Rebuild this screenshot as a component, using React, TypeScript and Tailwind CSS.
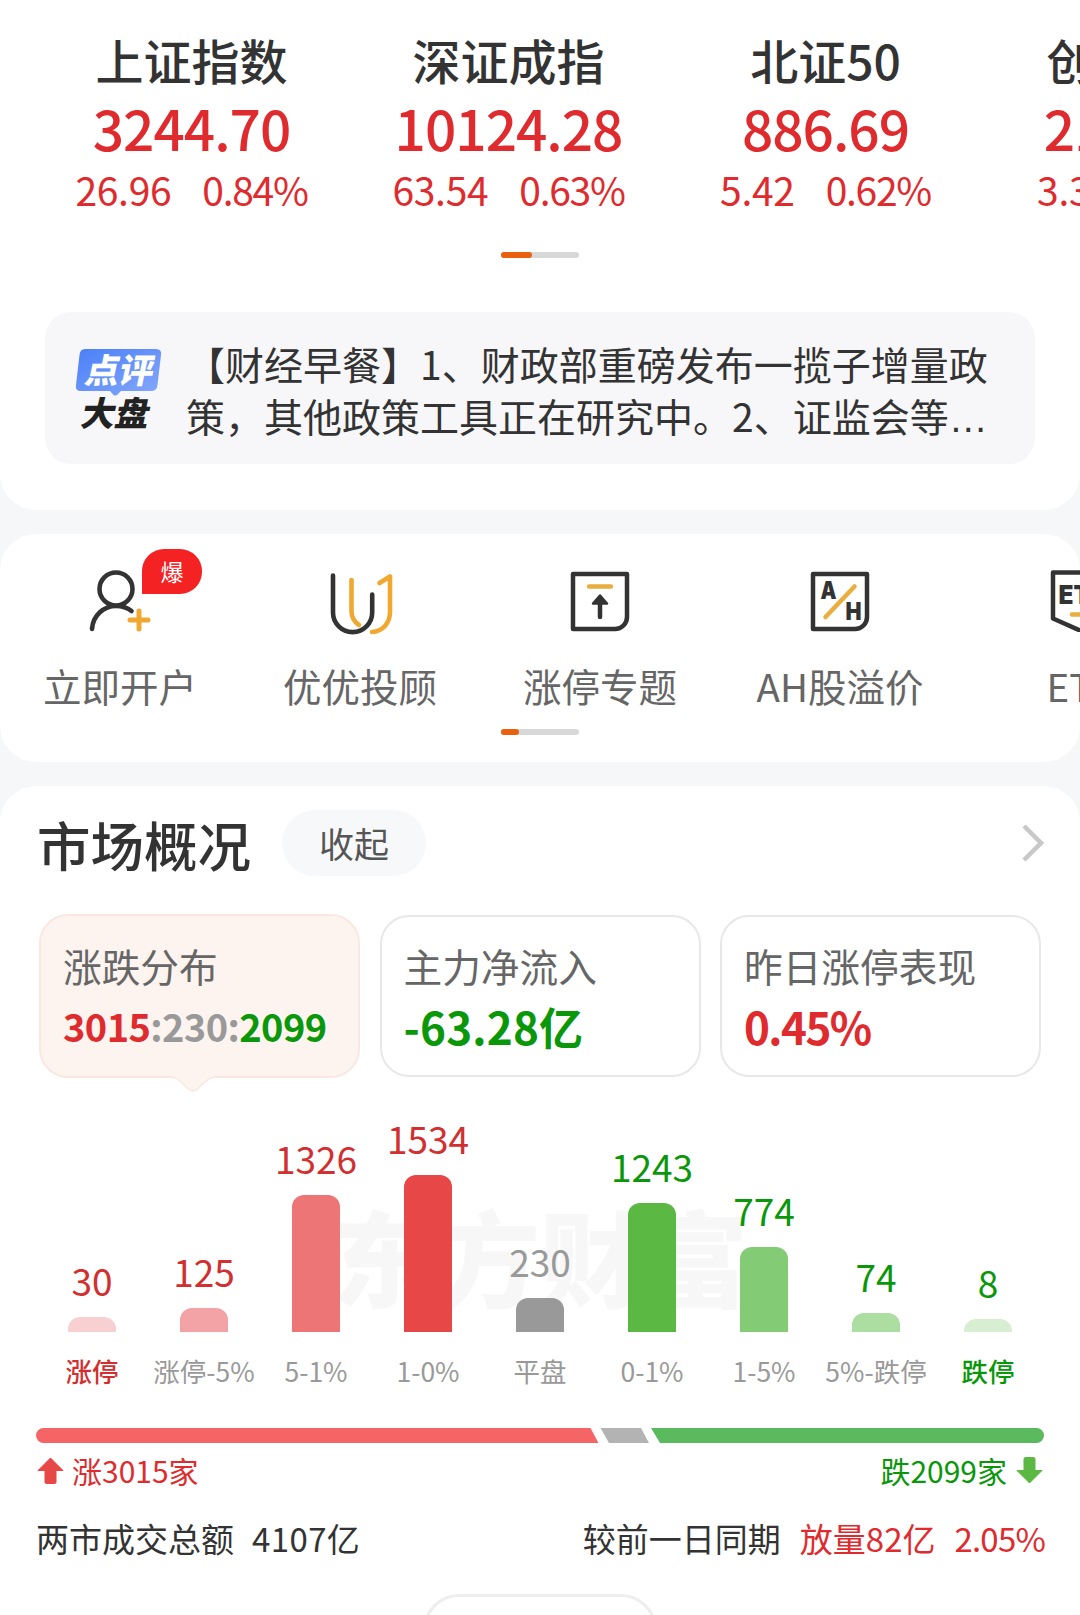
import React from 'react';
import clsx from 'clsx';

const RED = 'text-[#e02b2e]';
const GREEN = 'text-[#0a970a]';

const indices = [
  { name: '上证指数', value: '3244.70', change: '26.96', percent: '0.84%' },
  { name: '深证成指', value: '10124.28', change: '63.54', percent: '0.63%' },
  { name: '北证50', value: '886.69', change: '5.42', percent: '0.62%' },
  { name: '创业板指', value: '2104.09', change: '3.33', percent: '0.16%' },
];

const bars = [
  { label: '涨停', count: 30, height: 15, bar: 'bg-[#f9d0d1]', text: 'text-[#d22f30]', edge: 'text-[#d22f30] font-medium' },
  { label: '涨停-5%', count: 125, height: 24, bar: 'bg-[#f3a3a5]', text: 'text-[#d22f30]' },
  { label: '5-1%', count: 1326, height: 137, bar: 'bg-[#ed7576]', text: 'text-[#d22f30]' },
  { label: '1-0%', count: 1534, height: 157, bar: 'bg-[#e84747]', text: 'text-[#d22f30]' },
  { label: '平盘', count: 230, height: 34, bar: 'bg-[#999999]', text: 'text-[#999999]' },
  { label: '0-1%', count: 1243, height: 129, bar: 'bg-[#5bb943]', text: 'text-[#0a970a]' },
  { label: '1-5%', count: 774, height: 85, bar: 'bg-[#84cb75]', text: 'text-[#0a970a]' },
  { label: '5%-跌停', count: 74, height: 19, bar: 'bg-[#acdda1]', text: 'text-[#0a970a]' },
  { label: '跌停', count: 8, height: 13, bar: 'bg-[#d7eed2]', text: 'text-[#0a970a]', edge: 'text-[#0a970a] font-medium' },
];

const OpenAccountIcon = () => (
  <svg className="w-[64px] h-[64px]" viewBox="0 0 64 64" fill="none" strokeLinecap="round">
    <circle cx="28" cy="21" r="16.5" stroke="#333" strokeWidth="4.6" />
    <path d="M4 61C5 47 16 38 28 38C34 38 39 39.500 43.500 43" stroke="#333" strokeWidth="4.6" />
    <path d="M51 43V61M42 52H60" stroke="#f0a830" strokeWidth="5" />
  </svg>
);

const AdvisorIcon = () => (
  <svg className="w-[64px] h-[64px] overflow-visible" viewBox="0 0 64 64" fill="none" strokeLinecap="round" strokeLinejoin="round">
    <path d="M23.500 12V43C23.500 49 26.500 54 31 57" stroke="#f0a830" strokeWidth="4.6" />
    <path d="M51.500 15L62 8.500V44C62 55 54.500 63.500 44 64" stroke="#f0a830" strokeWidth="4.6" />
    <path d="M5 7.500V44.500A19.600 19.600 0 0 0 44.200 44.500V26.500" stroke="#333" strokeWidth="4.6" />
  </svg>
);

const LimitUpIcon = () => (
  <svg className="w-[64px] h-[64px]" viewBox="0 0 64 64" fill="none" strokeLinecap="round" strokeLinejoin="round">
    <path d="M5 6H59V49A12 12 0 0 1 47 61H5Z" stroke="#333" strokeWidth="4.500" />
    <path d="M21 18.500H43" stroke="#e8ae40" strokeWidth="4.500" />
    <path d="M32 49V32" stroke="#333" strokeWidth="4.500" />
    <path d="M32 27.500L39 35.500H25Z" fill="#333" stroke="#333" strokeWidth="2.500" />
  </svg>
);

const PremiumIcon = () => (
  <svg className="w-[64px] h-[64px]" viewBox="0 0 64 64" fill="none" strokeLinecap="round" strokeLinejoin="round">
    <path d="M5 6H59V49A12 12 0 0 1 47 61H5Z" stroke="#333" strokeWidth="4.500" />
    <path d="M17.500 49L46.500 18.500" stroke="#e8ae40" strokeWidth="4.500" />
    <text x="20.500" y="30.500" textAnchor="middle" fontSize="24" fontWeight="900" fontFamily="Inter" fill="#333" textLength="16" lengthAdjust="spacingAndGlyphs">A</text>
    <text x="45.500" y="51.500" textAnchor="middle" fontSize="25" fontWeight="900" fontFamily="Inter" fill="#333" textLength="16" lengthAdjust="spacingAndGlyphs">H</text>
  </svg>
);

const EtfIcon = () => (
  <svg className="w-[64px] h-[64px]" viewBox="0 0 64 64" fill="none" strokeLinecap="round" strokeLinejoin="round">
    <path d="M5 4.500H59V50.500L32 62.500L5 50.500Z" stroke="#333" strokeWidth="4.500" />
    <text x="33.500" y="36" textAnchor="middle" fontSize="26" fontWeight="900" fontFamily="Inter" fill="#333" textLength="46" lengthAdjust="spacingAndGlyphs">ETF</text>
    <path d="M24 46.500H41" stroke="#e8ae40" strokeWidth="4.500" />
  </svg>
);

const shortcuts = [
  { label: '立即开户', icon: OpenAccountIcon, badge: '爆' },
  { label: '优优投顾', icon: AdvisorIcon },
  { label: '涨停专题', icon: LimitUpIcon },
  { label: 'AH股溢价', icon: PremiumIcon },
  { label: 'ETF', icon: EtfIcon },
];

const Pager = ({ active }: { active: string }) => (
  <div className="w-[78px] h-[6px] mx-auto rounded-full bg-[#d8d8d8]">
    <div className={clsx('h-full rounded-full bg-[#e9600f]', active)} />
  </div>
);

const IndexStrip = () => (
  <div className="flex pl-[33px] pt-[27px]">
    {indices.map((item) => (
      <div key={item.name} className="w-[317px] shrink-0 flex flex-col items-center whitespace-nowrap">
        <div className="text-[48px] leading-[64px] font-medium text-[#333]">{item.name}</div>
        <div className={clsx('text-[55px] leading-[73px] font-medium tracking-[-1px]', RED)}>{item.value}</div>
        <div className={clsx('flex gap-[31px] pb-px text-[39px] leading-[51px]', RED)}>
          <span className="tracking-[-0.3px]">{item.change}</span>
          <span className="tracking-[-1.3px]">{item.percent}</span>
        </div>
      </div>
    ))}
  </div>
);

const NewsLogo = () => (
  <svg className="w-[88px] h-[84px] shrink-0" viewBox="0 0 88 84">
    <defs>
      <linearGradient id="bubble" x1="0" y1="0" x2="1" y2="1">
        <stop offset="0" stopColor="#4a80f8" />
        <stop offset="1" stopColor="#86a8fb" />
      </linearGradient>
    </defs>
    <path
      d="M10 3H81Q87 3 86 9L82.500 39Q82 45 76 45H46L42 49Q40 50 38.500 49L35 45H6Q0 45 1 39L4.500 9Q5 3 10 3Z"
      fill="url(#bubble)"
    />
    <g fontWeight="900" fontSize="34" transform="skewX(-12)">
      <text x="16.500" y="37" fill="#fff">点评</text>
      <text x="21.500" y="80.500" fill="#222">大盘</text>
    </g>
  </svg>
);

const Shortcuts = () => (
  <div className="flex">
    {shortcuts.map(({ label, icon: Icon, badge }) => (
      <div key={label} className="relative w-[240px] shrink-0 flex flex-col items-center pt-[34px] whitespace-nowrap">
        <Icon />
        {badge && (
          <span className="absolute left-[142px] top-[15px] w-[60px] h-[45px] rounded-[22px] rounded-bl-none bg-[#f42222] flex items-center justify-center text-[23px] text-white">
            {badge}
          </span>
        )}
        <span className="mt-[28px] text-[38.500px] leading-[50px] text-[#666]">{label}</span>
      </div>
    ))}
  </div>
);

const StatCard = ({ title, children }: { title: string; children: React.ReactNode }) => (
  <div className="w-[321px] h-[162px] rounded-[29px] border-2 border-[#e8e8e8] pl-[22px] pt-[22px] whitespace-nowrap">
    <div className="text-[38.700px] leading-[52px] text-[#666]">{title}</div>
    {children}
  </div>
);

const Distribution = () => (
  <div className="relative h-[290px] mt-[23px]">
    <div className="absolute inset-x-0 top-[84px] text-center text-[104px] leading-[140px] font-black text-[#f7f7f7]">东方财富</div>
    <div className="relative flex h-full pl-[36px]">
      {bars.map((item) => (
        <div key={item.label} className="w-[112px] shrink-0 flex flex-col items-center justify-end whitespace-nowrap">
          <span className={clsx('text-[37px] leading-[44px] mb-[15px]', item.text)}>{item.count}</span>
          <div className={clsx('w-[48px] rounded-t-[12px]', item.bar)} style={{ height: item.height }} />
          <span className={clsx('mt-[19px] text-[26.500px] leading-[40px]', item.edge ?? 'text-[#999]')}>{item.label}</span>
        </div>
      ))}
    </div>
  </div>
);

export default function App() {
  return (
    <div
      lang="zh-CN"
      className="w-[1080px] h-[1615px] overflow-hidden bg-[#f6f7f9] flex flex-col gap-6 font-['Noto_Sans_CJK_SC',sans-serif]"
    >
      <section className="h-[510px] shrink-0 overflow-hidden rounded-b-[36px] bg-white">
        <IndexStrip />
        <div className="mt-[36px]">
          <Pager active="w-[31px]" />
        </div>
        <div className="mt-[54px] mx-[45px] h-[152px] rounded-[26px] bg-[#f7f7f9] flex items-center pl-[30px]">
          <NewsLogo />
          <div className="ml-[23px] pt-[6px] text-[39px] leading-[51.500px] text-[#333] whitespace-nowrap">
            <div>【财经早餐】1、财政部重磅发布一揽子增量政</div>
            <div>
              策，其他政策工具正在研究中。2、证监会等<span className="font-['Liberation_Sans']">…</span>
            </div>
          </div>
        </div>
      </section>

      <section className="h-[228px] shrink-0 overflow-hidden rounded-[36px] bg-white">
        <Shortcuts />
        <div className="mt-[19px]">
          <Pager active="w-[18px]" />
        </div>
      </section>

      <section className="flex-1 overflow-hidden rounded-t-[36px] bg-white">
        <div className="flex items-center h-[66px] mt-[24px] pl-[37px] pr-[36px]">
          <h2 className="pt-[2px] text-[53.500px] leading-[66px] font-medium text-[#333]">市场概况</h2>
          <button className="ml-[31px] w-[144px] h-[66px] rounded-full bg-[#f7f8fa] text-[35px] text-[#555]">收起</button>
          <svg className="ml-auto w-[22px] h-[38px]" viewBox="0 0 22 38" fill="none">
            <path d="M2 2L19 19L2 36" stroke="#c8c8c8" strokeWidth="4.500" />
          </svg>
        </div>

        <div className="flex items-center justify-between mt-[38px] pl-[39px] pr-[39px]">
          <div className="relative w-[321px] h-[164px] rounded-[29px] border-2 border-[#f9e8e2] bg-[#fdf4f0] pl-[22px] pt-[23px] whitespace-nowrap">
            <div className="text-[38.700px] leading-[52px] text-[#666]">涨跌分布</div>
            <div className="text-[38px] leading-[69px] font-bold text-[#999] tracking-[-0.6px]">
              <span className={RED}>3015</span>:230:<span className={GREEN}>2099</span>
            </div>
            <svg className="absolute left-[131px] top-[159px] w-[42px] h-[18px]" viewBox="0 0 42 18">
              <path d="M0 0H42V2.500C38 2.500 36 4 34 6L25 14.500Q21 17.500 17 14.500L8 6C6 4 4 2.500 0 2.500Z" fill="#fdf4f0" />
              <path d="M0 2.500C4 2.500 6 4 8 6L17 14.500Q21 17.500 25 14.500L34 6C36 4 38 2.500 42 2.500" fill="none" stroke="#f9e8e2" strokeWidth="1.500" />
            </svg>
          </div>
          <StatCard title="主力净流入">
            <div className={clsx('text-[44px] leading-[70px] font-bold tracking-[0.2px]', GREEN)}>-63.28亿</div>
          </StatCard>
          <StatCard title="昨日涨停表现">
            <div className={clsx('text-[44px] leading-[70px] font-bold tracking-[-1.6px]', RED)}>0.45%</div>
          </StatCard>
        </div>

        <Distribution />

        <svg className="block mt-[37px] ml-[36px] w-[1008px] h-[15px]" viewBox="0 0 1008 15">
          <path d="M7.500 0H554.500L562.500 15H7.500A7.500 7.500 0 0 1 7.500 0Z" fill="#f56565" />
          <path d="M564.500 0H605L613 15H573Z" fill="#b3b3b3" />
          <path d="M615 0H1000.500A7.500 7.500 0 0 1 1000.500 15H624Z" fill="#5cba5e" />
        </svg>

        <div className="flex justify-between mt-[9px] pl-[37px] pr-[37px] text-[30px] leading-[36px]">
          <div className={clsx('flex items-center gap-[8px]', RED)}>
            <svg className="w-[27px] h-[27px]" viewBox="0 0 27 27">
              <path d="M13.500 1L26 13.500H19V25Q19 26.500 17.500 26.500H9.500Q8 26.500 8 25V13.500H1Z" fill="#e84747" stroke="#e84747" strokeLinejoin="round" />
            </svg>
            涨3015家
          </div>
          <div className={clsx('flex items-center gap-[9px]', GREEN)}>
            跌2099家
            <svg className="w-[27px] h-[27px]" viewBox="0 0 27 27">
              <path d="M13.500 26L26 13.500H19V2Q19 0.500 17.500 0.500H9.500Q8 0.500 8 2V13.500H1Z" fill="#5bb943" stroke="#5bb943" strokeLinejoin="round" />
            </svg>
          </div>
        </div>

        <div className="flex justify-between mt-[28px] pl-[36px] pr-[35px] text-[33px] leading-[44px] text-[#333] whitespace-nowrap">
          <div className="flex gap-[18px]">
            <span>两市成交总额</span>
            <span className="tracking-[0.4px]">4107亿</span>
          </div>
          <div className="flex gap-[19px]">
            <span>较前一日同期</span>
            <span className={RED}>放量82亿</span>
            <span className={clsx('tracking-[-0.8px]', RED)}>2.05%</span>
          </div>
        </div>

        <div className="mt-[34px] mx-auto w-[234px] h-[72px] rounded-full border-[3px] border-[#eeeeee]" />
      </section>
    </div>
  );
}
